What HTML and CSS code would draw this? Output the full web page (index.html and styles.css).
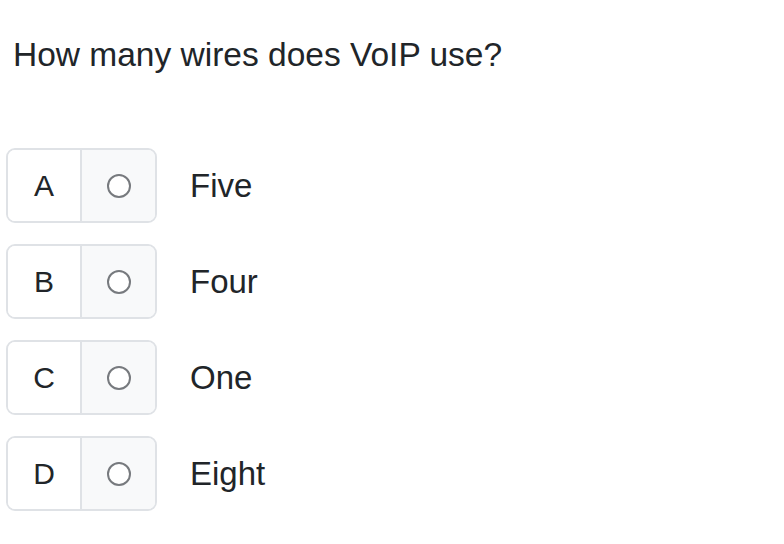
FILE: index.html
```html
<!DOCTYPE html>
<html lang="en">
<head>
<meta charset="utf-8">
<title>Question</title>
<link rel="stylesheet" href="styles.css">
</head>
<body>
<main class="quiz">
  <h1 class="question">How many wires does VoIP use?</h1>
  <div class="options">
    <div class="option">
      <div class="choice">
        <span class="letter">A</span>
        <span class="radio-cell"><span class="radio"></span></span>
      </div>
      <span class="answer">Five</span>
    </div>
    <div class="option">
      <div class="choice">
        <span class="letter">B</span>
        <span class="radio-cell"><span class="radio"></span></span>
      </div>
      <span class="answer">Four</span>
    </div>
    <div class="option">
      <div class="choice">
        <span class="letter">C</span>
        <span class="radio-cell"><span class="radio"></span></span>
      </div>
      <span class="answer">One</span>
    </div>
    <div class="option">
      <div class="choice">
        <span class="letter">D</span>
        <span class="radio-cell"><span class="radio"></span></span>
      </div>
      <span class="answer">Eight</span>
    </div>
  </div>
</main>
</body>
</html>
```
FILE: styles.css
```css
html, body {
  margin: 0;
  padding: 0;
  background: #ffffff;
}
body {
  font-family: "Liberation Sans", Arial, sans-serif;
  color: #212529;
}
.quiz {
  padding: 35px 0 0 6px;
}
.question {
  margin: 0 0 73px 7px;
  font-size: 33.5px;
  font-weight: 400;
  line-height: 1.2;
}
.options {
  display: flex;
  flex-direction: column;
  gap: 21px;
}
.option {
  display: flex;
  align-items: center;
  gap: 33px;
}
.choice {
  display: flex;
  width: 151px;
  height: 75px;
  box-sizing: border-box;
  border: 2px solid #dfe2e6;
  border-radius: 9px;
  overflow: hidden;
}
.letter {
  width: 72px;
  display: flex;
  align-items: center;
  justify-content: center;
  font-size: 30px;
  border-right: 2px solid #dfe2e6;
  background: #ffffff;
}
.radio-cell {
  flex: 1;
  display: flex;
  align-items: center;
  justify-content: center;
  background: #f8f9fa;
}
.radio {
  width: 24px;
  height: 24px;
  box-sizing: border-box;
  border: 2px solid #777a7e;
  border-radius: 50%;
  background: #ffffff;
}
.answer {
  font-size: 33px;
  line-height: 1.2;
}
```
